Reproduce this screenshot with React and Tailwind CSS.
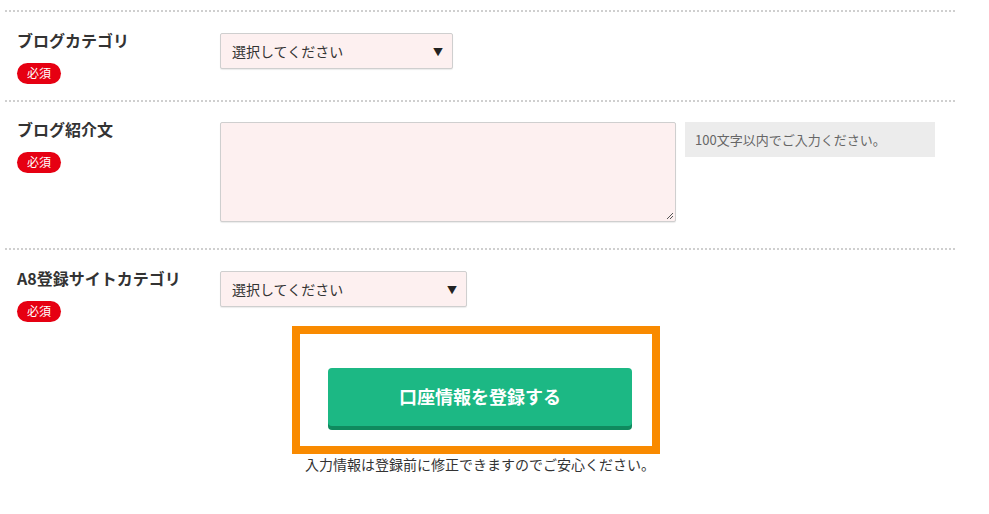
import React from 'react';

const jp = { fontFamily: '"Noto Sans CJK JP", "Noto Sans", sans-serif' };

// Red "required" pill
const Required = () => (
  <span className="inline-flex items-center justify-center w-[44px] h-[21px] rounded-full bg-[#e60012] text-white text-[12px] leading-none">
    必須
  </span>
);

const Label = ({ children }) => (
  <div className="w-[215px] shrink-0 pl-[12px] -mt-[4px] flex flex-col gap-[8px]">
    <span className="text-[16px] font-bold text-[#333] leading-[22px]">{children}</span>
    <div>
      <Required />
    </div>
  </div>
);

const Select = ({ width }) => (
  <div
    className={`relative h-[36px] ${width} bg-[#fdf0f0] border border-[#cfcfcf] rounded-[2px] shadow-[0_1px_1px_rgba(0,0,0,0.08)] flex items-center pl-[11px] text-[14px] text-[#333]`}
  >
    選択してください
    <span className="absolute right-[9px] top-[10px] text-[10px] text-[#222]">▼</span>
  </div>
);

export default function App() {
  return (
    <div className="min-h-[514px] bg-white" style={jp}>
      <div className="w-[950px] ml-[5px] pt-[10px]">
        {/* blog category */}
        <div className="border-t-2 border-dotted border-[#cfcfcf] flex pt-[21px] h-[90px]">
          <Label>ブログカテゴリ</Label>
          <Select width="w-[233px]" />
        </div>

        {/* blog intro */}
        <div className="border-t-2 border-dotted border-[#cfcfcf] flex pt-[20px] h-[148px]">
          <Label>ブログ紹介文</Label>
          <div className="relative w-[456px] h-[100px] bg-[#fdf0f0] border border-[#cfcfcf] rounded-[2px] shadow-[0_1px_1px_rgba(0,0,0,0.08)]">
            <svg className="absolute right-[1px] bottom-[1px]" width="10" height="10" viewBox="0 0 10 10">
              <path d="M9 3 L3 9 M9 6 L6 9" stroke="#555" strokeWidth="1" />
            </svg>
          </div>
          <div className="ml-[9px] w-[250px] h-[35px] bg-[#ececec] flex items-center pl-[10px] text-[13px] text-[#666]">
            100文字以内でご入力ください。
          </div>
        </div>

        {/* a8 site category */}
        <div className="border-t-2 border-dotted border-[#cfcfcf] flex pt-[21px]">
          <Label>A8登録サイトカテゴリ</Label>
          <Select width="w-[247px]" />
        </div>

        {/* submit */}
        <div className="flex flex-col items-center mt-[4px]">
          <div className="ml-[-8px] w-[368px] h-[128px] border-[8px] border-[#f98a00] flex justify-center pl-[8px] pt-[34px]">
            <button className="w-[304px] h-[58px] rounded-[4px] bg-[#1cb884] shadow-[0_4px_0_#0f8a5e] text-white text-[18px] font-bold">
              口座情報を登録する
            </button>
          </div>
          <p className="text-[14px] leading-[20px] text-[#333]">入力情報は登録前に修正できますのでご安心ください。</p>
        </div>
      </div>
    </div>
  );
}
